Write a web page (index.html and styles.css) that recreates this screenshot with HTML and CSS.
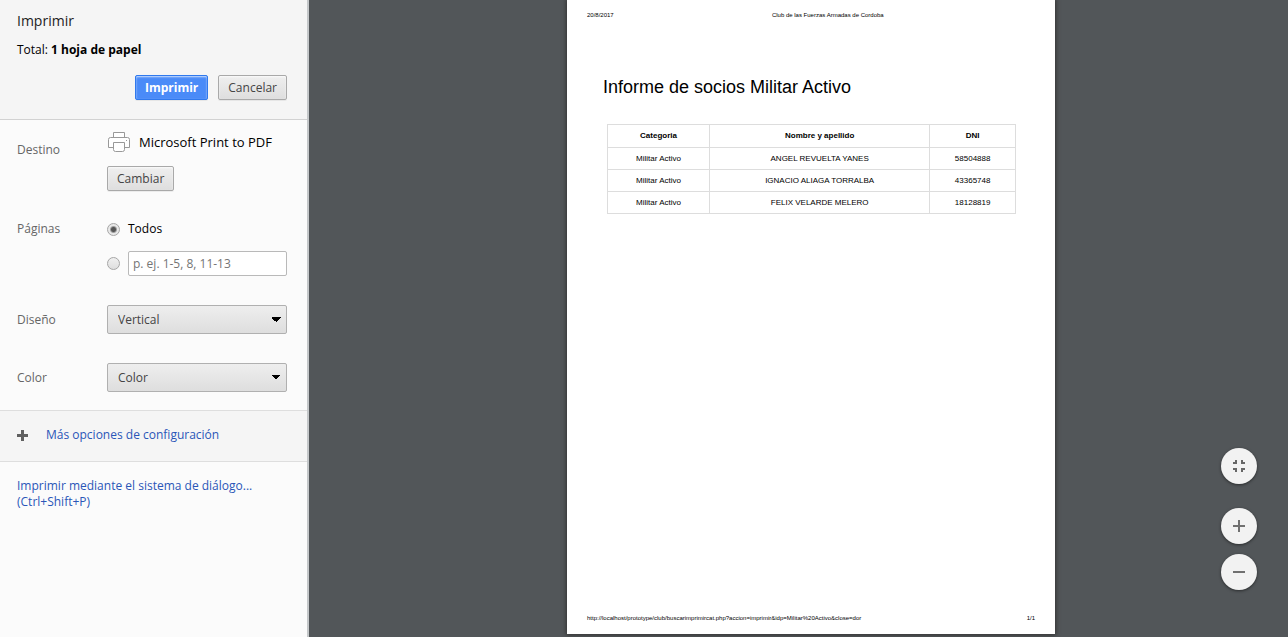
FILE: index.html
```html
<!DOCTYPE html>
<html lang="es">
<head>
<meta charset="utf-8">
<title>Imprimir</title>
<link rel="stylesheet" href="styles.css">
</head>
<body>
<form class="sidebar">
  <header class="summary">
    <h1 class="title">Imprimir</h1>
    <p class="total">Total: <b>1 hoja de papel</b></p>
    <div class="actions">
      <button type="button" class="btn primary">Imprimir</button>
      <button type="button" class="btn">Cancelar</button>
    </div>
  </header>
  <div class="settings">
    <section class="row destination">
      <span class="label">Destino</span>
      <div class="field">
        <div class="printer">
          <svg width="24" height="22" viewBox="0 0 24 22" fill="#fff" stroke="#999">
            <path d="M6.5 6.5v-5h11v5M6.5 16.500h-5v-8q0-2 2-2h17q2 0 2 2v8h-5"/>
            <path d="M6.500 11.500h11v7q0 2-2 2h-7q-2 0-2-2z"/>
            <path d="M19 9.500h1"/>
          </svg>
          <span>Microsoft Print to PDF</span>
        </div>
        <button type="button" class="btn">Cambiar</button>
      </div>
    </section>
    <section class="row pages">
      <span class="label">Páginas</span>
      <div class="field">
        <label class="option"><input class="radio" type="radio" name="pages" checked>Todos</label>
        <div class="option range">
          <input class="radio" type="radio" name="pages" aria-label="Intervalo de páginas">
          <input class="text" type="text" placeholder="p. ej. 1-5, 8, 11-13" aria-label="Páginas">
        </div>
      </div>
    </section>
    <section class="row choice">
      <label class="label" for="layout">Diseño</label>
      <div class="field"><select class="select" id="layout"><option>Vertical</option><option>Horizontal</option></select></div>
    </section>
    <section class="row choice">
      <label class="label" for="color">Color</label>
      <div class="field"><select class="select" id="color"><option>Color</option><option>Blanco y negro</option></select></div>
    </section>
  </div>
  <div class="more">
    <svg width="11" height="11" viewBox="0 0 11 11" fill="#606060"><path d="M4 0h3v4h4v3H7v4H4V7H0V4h4z"/></svg>
    <a class="link" href="#">Más opciones de configuración</a>
  </div>
  <div class="system"><a class="link" href="#">Imprimir mediante el sistema de diálogo... (Ctrl+Shift+P)</a></div>
</form>
<main class="preview">
  <article class="paper">
    <div class="running head"><span>20/8/2017</span><span>Club de las Fuerzas Armadas de Cordoba</span><span></span></div>
    <h2 class="report">Informe de socios Militar Activo</h2>
    <table class="members">
      <thead><tr><th class="cat">Categoria</th><th>Nombre y apellido</th><th class="dni">DNI</th></tr></thead>
      <tbody>
        <tr><td>Militar Activo</td><td>ANGEL REVUELTA YANES</td><td>58504888</td></tr>
        <tr><td>Militar Activo</td><td>IGNACIO ALIAGA TORRALBA</td><td>43365748</td></tr>
        <tr><td>Militar Activo</td><td>FELIX VELARDE MELERO</td><td>18128819</td></tr>
      </tbody>
    </table>
    <div class="running foot"><span>http://localhost/prototype/club/buscarimprimircat.php?accion=imprimir&amp;idp=Militar%20Activo&amp;close=dor</span><span>1/1</span></div>
  </article>
  <div class="zoom">
    <button type="button" class="round fit" aria-label="Ajustar a la página"><svg width="12" height="12" viewBox="0 0 12 12" fill="none" stroke="#666" stroke-width="2"><path d="M0 3h3V0M9 0v3h3M12 9H9v3M3 12V9H0"/></svg></button>
    <button type="button" class="round" aria-label="Acercar"><svg width="12" height="12" viewBox="0 0 12 12" fill="none" stroke="#707070" stroke-width="2"><path d="M6 0v12M0 6h12"/></svg></button>
    <button type="button" class="round" aria-label="Alejar"><svg width="12" height="12" viewBox="0 0 12 12" fill="none" stroke="#707070" stroke-width="2"><path d="M0 6h12"/></svg></button>
  </div>
</main>
</body>
</html>
```
FILE: styles.css
```css
* { box-sizing: border-box; }
body {
  margin: 0;
  min-height: 100vh;
  display: flex;
  font: 12px/16px "Open Sans", "Noto Sans", sans-serif;
  color: #000;
}
button, input, select { font: inherit; }
svg { display: block; flex: none; }
.sidebar {
  flex: none;
  width: 309px;
  background: #fbfbfb;
  border-right: 2px solid #c4c7c9;
}
.summary {
  padding: 11px 20px 19px 17px;
  background: #f5f5f5;
  border-bottom: 1px solid #d2d2d2;
}
.title { margin: 0; font-size: 14px; line-height: 20px; font-weight: 400; color: #222; }
.total { margin: 11px 0 17px; }
.actions { display: flex; justify-content: flex-end; gap: 10px; }
.btn {
  height: 25px;
  padding: 0 9px;
  border: 1px solid #a9a9a9;
  border-radius: 2px;
  background: linear-gradient(#efefef, #dedede);
  box-shadow: 0 1px 0 rgba(0, 0, 0, .06), inset 0 1px 2px rgba(255, 255, 255, .75);
  color: #444;
}
.primary {
  border-color: #3079ed;
  background: #4a8bf8;
  color: #fff;
  font-weight: 700;
}
.settings { padding: 10px 20px 18px 17px; }
.row { display: flex; }
.label { flex: none; width: 90px; color: #666; }
.field { flex: 1; min-width: 0; }
.destination .label { padding-top: 12px; }
.printer { display: flex; align-items: center; gap: 8px; margin-bottom: 12px; font-size: 13px; line-height: 24px; }
.pages { margin: 30px 0 29px; }
.option { display: flex; align-items: center; gap: 8px; }
.range { margin-top: 14px; }
.radio {
  appearance: none;
  flex: none;
  width: 13px;
  height: 13px;
  margin: 0;
  border: 1px solid #a6a6a6;
  border-radius: 50%;
  background: linear-gradient(#f0f0f0, #dedede);
}
.radio:checked { background: radial-gradient(circle, #555 0 2px, #e8e8e8 4px); }
.text {
  flex: 1;
  min-width: 0;
  height: 25px;
  padding: 0 4px;
  border: 1px solid #b9b9b9;
  border-radius: 2px;
  background: #fff;
}
.text::placeholder { color: #757575; }
.choice { align-items: center; }
.choice + .choice { margin-top: 29px; }
.select {
  appearance: none;
  display: block;
  width: 100%;
  height: 29px;
  padding: 0 24px 0 10px;
  border: 1px solid #b0b0b0;
  border-radius: 2px;
  background:
    linear-gradient(to top right, transparent 50%, #000 50%) right 10px center / 5px 5px no-repeat,
    linear-gradient(to top left, transparent 50%, #000 50%) right 5px center / 5px 5px no-repeat,
    linear-gradient(#eee, #dedede);
  color: #444;
}
.more {
  display: flex;
  align-items: center;
  gap: 18px;
  padding: 16px 17px 18px;
  background: #f5f5f5;
  border: solid #dedede;
  border-width: 1px 0;
}
.link { color: #2a56b8; text-decoration: none; }
.system { padding: 16px 20px 16px 17px; }
.preview {
  flex: 1;
  position: relative;
  display: flex;
  justify-content: center;
  padding: 0 0 3px 25px;
  background: #525659;
}
.paper {
  width: 488px;
  display: flex;
  flex-direction: column;
  background: #fff;
  box-shadow: 0 0 4px 1px #333;
  font-family: "Liberation Sans", Arial, sans-serif;
}
.running { display: flex; justify-content: space-between; padding: 0 20px; font-size: 6px; line-height: 8px; }
.head { display: grid; grid-template-columns: 11fr auto 9fr; padding-top: 11px; }
.report { margin: 57px 36px 0; font-size: 18px; line-height: 22px; font-weight: 400; }
.members {
  margin: 26px 39px 0 40px;
  border-collapse: collapse;
  table-layout: fixed;
  font-size: 8px;
  line-height: 10px;
  text-align: center;
}
.members th, .members td { height: 22px; padding: 0; border: 1px solid #ddd; }
.members th { height: 23px; }
.cat { width: 25%; }
.dni { width: 21%; }
.foot { margin-top: auto; padding-bottom: 12px; }
.zoom { position: absolute; right: 31px; bottom: 47px; display: grid; gap: 10px; }
.round {
  display: grid;
  place-items: center;
  width: 36px;
  height: 36px;
  padding: 0;
  border: 0;
  border-radius: 50%;
  background: #f2f2f2;
  box-shadow: 0 1px 3px rgba(0, 0, 0, .5);
}
.fit { margin-bottom: 14px; }
```
